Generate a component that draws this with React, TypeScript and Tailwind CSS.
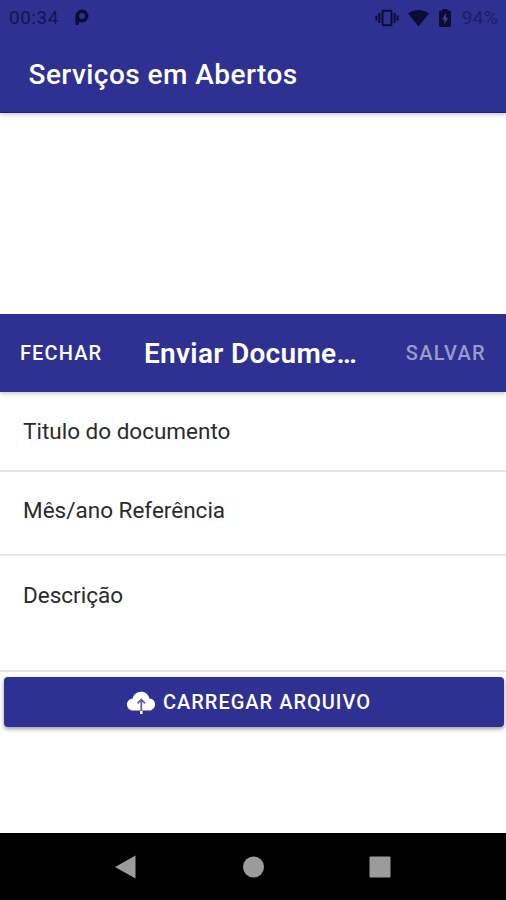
const fields = [
    { label: 'Titulo do documento', className: 'h-[80px] pt-[23px]' },
    { label: 'Mês/ano Referência', className: 'h-[84px] pt-[22px]' },
    { label: 'Descrição', className: 'h-[116px] pt-[23px]' },
]

function StatusBar() {
    return (
        <div className="flex h-9 items-center justify-between pl-[9px] pr-[8px] text-[#14154f]">
            <div className="flex items-center">
                <span className="w-[65px] text-[19px] leading-5 tracking-[0.5px]">00:34</span>
                <svg className="h-[18px] w-[15px]" viewBox="0 0 15 18" fill="none" stroke="#0d0d33" strokeWidth="3.6">
                    <circle cx="8" cy="7" r="4.7" />
                    <path d="M3.200 8v6.500" strokeLinecap="round" />
                </svg>
            </div>
            <div className="flex items-center">
                {/* Vibrate */}
                <svg className="mr-[9px] h-[18px] w-6" viewBox="0 0 24 18" fill="none" stroke="#0d0d33" strokeWidth="2">
                    <rect x="7.500" y="1.700" width="9" height="14.600" rx="1" />
                    <path d="M4.3 4v10M1.4 6.500v5M19.7 4v10M22.6 6.500v5" />
                </svg>
                {/* Wi-Fi */}
                <svg className="mr-[10px] h-[18px] w-[21px]" viewBox="0 0 21 18" fill="#0d0d33">
                    <path d="M0 4.5C6-.2 15-.2 21 4.5L10.5 17.5z" />
                </svg>
                {/* Battery */}
                <svg className="mr-[11px] h-[18px] w-3" viewBox="0 0 12 18">
                    <path d="M3.500 0h5v1.500h2Q12 1.500 12 3v13.500Q12 18 10.500 18h-9Q0 18 0 16.500V3Q0 1.500 1.500 1.500h2z" fill="#0d0d33" />
                    <path d="M7 4L3 10.500h2.500V15.500L9 8.800H7z" fill="#3c3e99" />
                </svg>
                <span className="text-[19px] leading-5 tracking-[0.3px] text-[#1d1e66]">94%</span>
            </div>
        </div>
    )
}

function CloudUploadIcon() {
    return (
        <svg className="h-7 w-7" viewBox="0 0 28 28">
            <path d="M6.400 22.500C2.800 22.500 0 20 0 16.400C0 13.300 2.300 11 5.600 10.400C6.600 6.500 9.900 3.700 14 3.700C18.200 3.700 21.500 6.300 22.400 10.600C25.700 10.800 28 13.200 28 16.400C28 19.900 25.300 22.500 21.700 22.500z" fill="white" />
            <path d="M14.300 22.500V26" stroke="white" strokeWidth="2.400" />
            <path d="M14.300 23V12M10.500 15.300L14.300 11.500L18.100 15.300" fill="none" stroke="#65669f" strokeWidth="1.900" />
        </svg>
    )
}

function ModalHeader() {
    return (
        <div className="flex h-[78px] items-center bg-[#2e3092] pl-5 pr-5 text-white shadow-[0_2px_4px_rgba(0,0,0,0.2)]">
            <button className="w-[124px] text-left text-[20px] font-medium tracking-[1.1px]">FECHAR</button>
            <h2 className="w-[220px] pt-[2px] text-[28px] font-semibold tracking-[0.3px]">Enviar Docume…</h2>
            <button className="ml-auto text-[20px] font-medium tracking-[1.3px] text-[#9a9bcb]">SALVAR</button>
        </div>
    )
}

function NavigationBar() {
    return (
        <div className="flex h-[67px] items-center justify-center bg-black">
            <svg className="h-6 w-[276px]" viewBox="0 0 276 24" fill="#9b9b9b">
                <path d="M0 12L20.500 .5v23z" />
                <circle cx="138.500" cy="12" r="10.500" />
                <rect x="254.500" y="1.500" width="21" height="21" rx="1" />
            </svg>
        </div>
    )
}

export default function App() {
    return (
        <div className="flex h-[900px] w-[506px] flex-col overflow-hidden bg-white font-['Roboto',sans-serif]">
            <header className="h-[113px] shrink-0 border-b border-[#1c1d80] bg-[#2e3092] shadow-[0_2px_4px_rgba(0,0,0,0.2)]">
                <StatusBar />
                <h1 className="pl-[28.5px] pt-[18px] text-[28px] font-medium leading-[42px] tracking-[0.45px] text-white">Serviços em Abertos</h1>
            </header>

            <main className="flex flex-1 flex-col pt-[201px]">
                <ModalHeader />
                {fields.map((field) => (
                    <div key={field.label} className={`border-b-2 border-[#e6e6e6] pl-[23px] text-[22.5px] leading-8 text-[#2b2b2b] ${field.className}`}>
                        {field.label}
                    </div>
                ))}
                <button className="ml-[3.5px] mr-[2.5px] mt-[5px] flex h-[50px] items-center justify-center gap-2 rounded bg-[#2e3092] pr-[9px] text-[20px] font-medium tracking-[1px] text-white shadow-[0_2px_4px_rgba(0,0,0,0.4)]">
                    <CloudUploadIcon />
                    CARREGAR ARQUIVO
                </button>
            </main>

            <NavigationBar />
        </div>
    )
}
